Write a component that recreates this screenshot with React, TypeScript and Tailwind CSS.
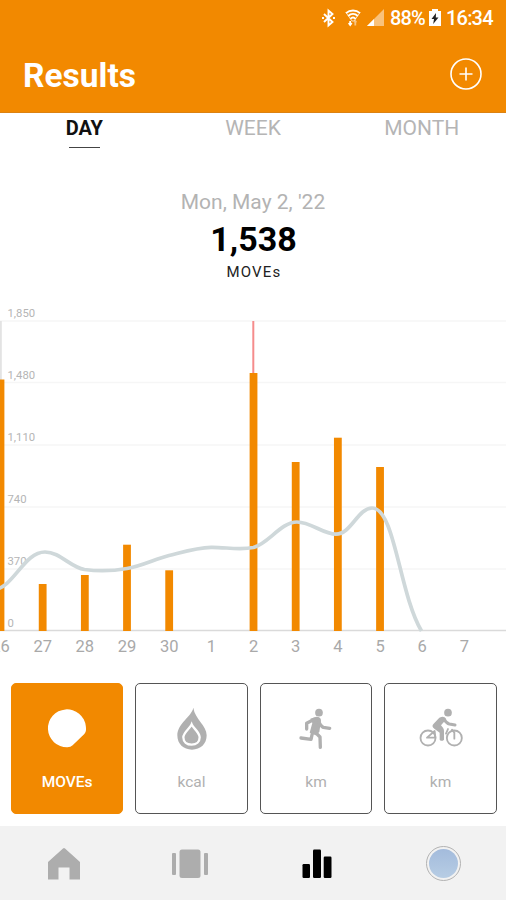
import React, { useState } from "react";
import clsx from "clsx";

const BASELINE = 330.5;
const STEP = 42.17;

const days = [
  { label: "26", top: 79.5 },
  { label: "27", top: 284 },
  { label: "28", top: 275 },
  { label: "29", top: 244.7 },
  { label: "30", top: 270.3 },
  { label: "1" },
  { label: "2", top: 73 },
  { label: "3", top: 162 },
  { label: "4", top: 137.7 },
  { label: "5", top: 167 },
  { label: "6" },
  { label: "7" },
];

const scale = [
  { label: "1,850", y: 21 },
  { label: "1,480", y: 82.5 },
  { label: "1,110", y: 145 },
  { label: "740", y: 207 },
  { label: "370", y: 269 },
  { label: "0", y: 330.5 },
];

const StatusBar = () => (
  <div className="flex h-9 items-center text-white">
    <svg className="ml-[322px] h-5 w-[13px]" viewBox="0 0 13 20" fill="none" stroke="currentColor" strokeWidth="1.900">
      <path d="M2 6l8.500 8-4 3.500V2.500l4 3.500L2 14M12 9v2M1 9v2" />
    </svg>
    <svg className="ml-[10px] h-5 w-4" viewBox="0 0 16 20" fill="none" stroke="currentColor" strokeWidth="1.800">
      <path d="M1 5.200C5 1.600 11 1.600 15 5.200M3.200 8C6 5.300 10 5.300 12.800 8M5.300 10.800C7 9.200 9 9.200 10.700 10.800" />
      <path d="M1 4.500L7 13h2l6-8.500" strokeWidth="1" opacity=".7" />
      <path d="M5.200 13v4.500M3.700 15l1.500 2 1.500-2" />
      <path d="M10.300 17.500v-4M9.300 14.500l1-1.500 1 1.500" opacity=".5" />
    </svg>
    <svg className="ml-[5px] h-5 w-[19px]" viewBox="0 0 19 20">
      <path d="M1 18L18 1v17z" fill="#f9c27b" />
      <path d="M1 18l7-7v7z" fill="#fff" />
    </svg>
    <span className="ml-[5px] w-[36px] text-[20px] leading-5 font-medium tracking-[-0.900px]">88%</span>
    <svg className="ml-[3px] h-5 w-3" viewBox="0 0 12 20">
      <path d="M0 3h3V1h6v2h3v15H0z" fill="#fff" />
      <path d="M7 5L2.500 11H5l-.8 5L9.500 9.500H6.800z" fill="#222" />
    </svg>
    <span className="ml-[5px] text-[20px] leading-5 font-medium tracking-[-0.8px]">16:34</span>
  </div>
);

const Chart = () => (
  <svg className="block h-[360px] w-[506px]" viewBox="0 0 506 360">
    {scale.map((s) => (
      <g key={s.label}>
        <path d={`M0 ${s.y}H506`} stroke={s.label === "0" ? "#dadada" : "#f6f6f6"} strokeWidth="1.3" />
        <text x="7.5" y={s.y - 3.6} fontSize="11.3" fill="#b5b5b5">
          {s.label}
        </text>
      </g>
    ))}
    <path d="M.8 21v59" stroke="#e3e3e3" strokeWidth="2" />
    <path d="M253.300 21v53" stroke="#f58c8c" strokeWidth="2" />
    {days.map((d, i) => (
      <g key={d.label}>
        {d.top !== undefined && (
          <rect x={i * STEP - 3.4} y={d.top} width="7.8" height={BASELINE + 0.5 - d.top} fill="#f28900" />
        )}
        <text x={i * STEP + 0.5} y="352" fontSize="16.5" fill="#a9a9a9" textAnchor="middle">
          {d.label}
        </text>
      </g>
    ))}
    <path
      d="M-6 290C14 287 24 252 45 252C60 252 70 267 84.500 269.500C99 271.500 113 271 127 268.500C142 266 155 259 169 255.500C183 252 197 247.500 211 247.300C225 247 239 250.500 253.300 247.500C268 244 281 222 297 222C311 222 323 234.200 336 234.200C351 234.200 358 208 372 208C395 208 399 293 421.500 331"
      fill="none"
      stroke="#cfd8da"
      strokeWidth="3.700"
    />
  </svg>
);

const MovesIcon = () => (
  <path d="M131.500 67A57 57 0 1 0 76 130Q86 130 92 124L127 90Q134 83 131.500 67Z" />
);

const FlameIcon = () => (
  <>
    <path d="M79 11C74 38 31 58 31 94C31 120 49 137 75 137C101 137 119 120 119 94C119 64 84 46 79 11Z" />
    <path
      d="M74 61C69 73 49 85 49 100C49 114 60 122 74 122C88 122 98 114 98 100C98 85 79 73 74 61Z"
      stroke="#fff"
      strokeWidth="7"
    />
  </>
);

const RunIcon = () => (
  <>
    <circle cx="84" cy="26" r="11.500" />
    <path d="M58 44L76 38Q90 38 90 50L85 84 74 94 56 86 64 57Z" />
    <g fill="none" stroke="currentColor" strokeWidth="10" strokeLinecap="round" strokeLinejoin="round">
      <path d="M47 75V58L70 46" />
      <path d="M82 50Q89 67 97 70L116 73" />
      <path d="M65 84L60 106 30 102" />
      <path d="M72 84L87 99 88 130" />
    </g>
  </>
);

const BikeIcon = () => (
  <>
    <circle cx="96" cy="26" r="11.500" />
    <path d="M70 41Q86 33 91 46L75 64 81 71Q84 75 84 81V107Q77 114 71 107V86L55 74Q45 67 53 59Z" />
    <g fill="none" stroke="currentColor" strokeLinecap="round">
      <g strokeWidth="5.500">
        <circle cx="36" cy="102" r="22.500" />
        <circle cx="115" cy="102" r="22.500" />
        <path d="M33 101L56 81 58 101ZM90 89L96 75M108 77L115 86V104" strokeLinejoin="round" />
      </g>
      <path d="M84 46Q92 58 100 60L117 63" strokeWidth="9" />
    </g>
  </>
);

const metrics = [
  { id: "moves", label: "MOVEs", icon: <MovesIcon /> },
  { id: "kcal", label: "kcal", icon: <FlameIcon /> },
  { id: "run", label: "km", icon: <RunIcon /> },
  { id: "bike", label: "km", icon: <BikeIcon /> },
];

const BottomNav = () => (
  <nav className="grid h-[74px] grid-cols-4 items-center justify-items-center bg-[#f2f2f2] pt-px pl-px text-[#adadad]">
    <button type="button" aria-label="Home">
      <svg className="h-9 w-9" viewBox="0 0 36 36" fill="currentColor">
        <path d="M17 2.500Q18 1.500 19 2.500L34 16V33.500H23.500V21.500H12.500V33.500H2V16Z" />
      </svg>
    </button>
    <button type="button" aria-label="Cards">
      <svg className="h-9 w-9" viewBox="0 0 36 36" fill="currentColor">
        <rect x="7.500" y="3.500" width="21" height="28.500" rx="2.500" />
        <rect x="0" y="7" width="4" height="22" rx="1" />
        <rect x="32" y="7" width="4" height="22" rx="1" />
      </svg>
    </button>
    <button type="button" aria-label="Results">
      <svg className="h-9 w-9 text-black" viewBox="0 0 36 36" fill="currentColor">
        <rect x="3.500" y="18" width="7.500" height="14" rx="1.200" />
        <rect x="14" y="3.500" width="8" height="28.500" rx="1.200" />
        <rect x="24.700" y="10.500" width="7.800" height="21.500" rx="1.200" />
      </svg>
    </button>
    <button
      type="button"
      aria-label="Profile"
      className="ml-px flex h-[35px] w-[35px] items-center justify-center rounded-full border border-[#b3b3b3]"
    >
      <span className="h-[29px] w-[29px] rounded-full bg-linear-to-b from-[#a3bbdc] to-[#b7cde4]" />
    </button>
  </nav>
);

const App: React.FC = () => {
  const [metric, setMetric] = useState("moves");

  return (
    <div className="flex h-[900px] w-[506px] flex-col overflow-hidden bg-white font-[Roboto,sans-serif]">
      <header className="h-[113px] border-b border-[#dc8212] bg-[#f28900] text-white">
        <StatusBar />
        <div className="flex h-[76px] items-center justify-between pr-6 pl-[23px]">
          <h1 className="pt-[3px] text-[33.500px] leading-none font-bold">Results</h1>
          <button type="button" aria-label="Add">
            <svg className="h-8 w-8" viewBox="0 0 32 32" fill="none" stroke="currentColor" strokeWidth="1.600">
              <circle cx="16" cy="16" r="15" />
              <path d="M16 9.500v13M9.500 16h13" />
            </svg>
          </button>
        </div>
      </header>

      <div className="grid h-[75px] grid-cols-3 text-center text-[21px] leading-[30px] text-[#b5b5b5]">
        <div className="flex flex-col items-center text-[20px] font-bold text-[#111]">
          DAY
          <span className="mt-1 h-px w-[31px] bg-[#444]" />
        </div>
        <div>WEEK</div>
        <div>MONTH</div>
      </div>

      <div className="flex h-[112px] flex-col items-center">
        <p className="text-[21px] leading-7 text-[#b3b3b3]">Mon, May 2, '22</p>
        <p className="pl-px text-[34px] leading-[46px] font-bold text-black">1,538</p>
        <p className="pl-[2px] text-[15px] leading-5 tracking-[1.200px] text-[#222]">MOVEs</p>
      </div>

      <Chart />

      <div className="flex h-[166px] gap-[11.700px] pt-[22.500px] pl-[10.700px]">
        {metrics.map((m) => (
          <button
            key={m.id}
            type="button"
            onClick={() => setMetric(m.id)}
            className={clsx(
              "flex h-[131.500px] w-[112.800px] shrink-0 flex-col items-center rounded-[5px] border pt-5",
              metric === m.id ? "border-[#f28900] bg-[#f28900] text-white" : "border-[#555] bg-white text-[#b0b0b0]"
            )}
          >
            <svg className="h-[50px] w-[50px]" viewBox="0 0 150 150" fill="currentColor">
              {m.icon}
            </svg>
            <span className={clsx("mt-[18px] text-[15.500px] leading-5", metric === m.id && "font-medium")}>{m.label}</span>
          </button>
        ))}
      </div>

      <BottomNav />
    </div>
  );
};

export default App;
